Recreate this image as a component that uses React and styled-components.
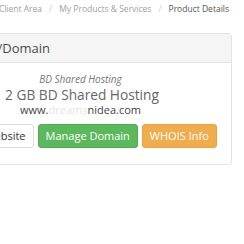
import styled, { createGlobalStyle } from "styled-components";

const Global = createGlobalStyle`
  html, body {
    margin: 0;
    padding: 0;
    background: #ffffff;
    overflow: hidden;
  }
  body {
    font-family: "Open Sans", "Liberation Sans", sans-serif;
    color: #333;
  }
`;

const Page = styled.div`
  width: 244px;
  height: 244px;
  overflow: hidden;
`;

const Breadcrumb = styled.ol`
  list-style: none;
  margin: 0;
  padding: 2px 15px 0 0;
  display: flex;
  justify-content: flex-end;
  font-size: 8.5px;
  line-height: 14px;
  white-space: nowrap;
`;

const Crumb = styled.li`
  color: ${(p) => (p.$active ? "#555" : "#a0a0a0")};
  &:not(:first-child)::before {
    content: "/";
    color: #ccc;
    padding: 0 7px;
  }
`;

const Card = styled.div`
  margin: 17px 0 0 -71px;
  width: 301px;
  border: 1px solid #e4e4e4;
  border-radius: 3px;
  background: #fff;
`;

const CardHeader = styled.div`
  background: #f5f5f5;
  border-bottom: 1px solid #e4e4e4;
  padding: 7px 15px 7px 21px;
  font-size: 13px;
  line-height: 15px;
  color: #4a4a4a;
  height: 14px;
`;

const CardBody = styled.div`
  padding: 9px 15px 16px;
  display: flex;
  flex-direction: column;
  align-items: center;
  text-align: center;
`;

const Group = styled.em`
  font-size: 10px;
  line-height: 14px;
  color: #777;
`;

const Product = styled.div`
  font-size: 13.7px;
  line-height: 17px;
  color: #666;
  padding-left: 3px;
`;

const Domain = styled.div`
  font-size: 11px;
  line-height: 14px;
  color: #444;
`;

const Masked = styled.span`
  color: #e6e6e6;
`;

const Actions = styled.div`
  display: flex;
  gap: 4px;
  margin-top: 7px;
  padding-left: 8px;
`;

const variants = {
  default: { bg: "#fff", border: "#ddd", color: "#333" },
  success: { bg: "#5cb85c", border: "#4cae4c", color: "#fff" },
  warning: { bg: "#f0ad4e", border: "#eea236", color: "#fff" },
};

const Button = styled.button`
  font-family: inherit;
  font-size: 11px;
  line-height: 15px;
  padding: 3px 7px 4px;
  border-radius: 3px;
  border: 1px solid ${(p) => variants[p.$variant].border};
  background: ${(p) => variants[p.$variant].bg};
  color: ${(p) => variants[p.$variant].color};
  white-space: nowrap;
`;

export default function App() {
  return (
    <Page>
      <Global />
      <Breadcrumb>
        <Crumb>Client Area</Crumb>
        <Crumb>My Products &amp; Services</Crumb>
        <Crumb $active>Product Details</Crumb>
      </Breadcrumb>
      <Card>
        <CardHeader>Hosting/Domain</CardHeader>
        <CardBody>
          <Group>BD Shared Hosting</Group>
          <Product>2 GB BD Shared Hosting</Product>
          <Domain>
            www.<Masked>dreams</Masked>nidea.com
          </Domain>
          <Actions>
            <Button $variant="default">Visit Website</Button>
            <Button $variant="success">Manage Domain</Button>
            <Button $variant="warning">WHOIS Info</Button>
          </Actions>
        </CardBody>
      </Card>
    </Page>
  );
}
